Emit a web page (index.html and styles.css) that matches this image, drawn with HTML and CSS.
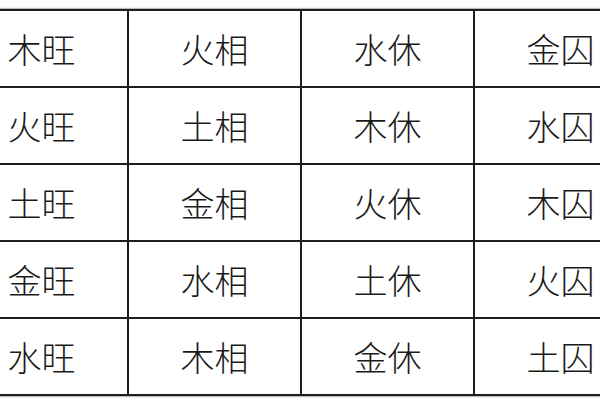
FILE: index.html
```html
<!DOCTYPE html>
<html lang="zh">
<head>
<meta charset="utf-8">
<title>旺相休囚</title>
<link rel="stylesheet" href="styles.css">
</head>
<body>
<div class="frame">
<div class="grid">
  <div class="cell">木旺</div><div class="cell">火相</div><div class="cell">水休</div><div class="cell">金囚</div>
  <div class="cell">火旺</div><div class="cell">土相</div><div class="cell">木休</div><div class="cell">水囚</div>
  <div class="cell">土旺</div><div class="cell">金相</div><div class="cell">火休</div><div class="cell">木囚</div>
  <div class="cell">金旺</div><div class="cell">水相</div><div class="cell">土休</div><div class="cell">火囚</div>
  <div class="cell">水旺</div><div class="cell">木相</div><div class="cell">金休</div><div class="cell">土囚</div>
</div>
</div>
</body>
</html>
```
FILE: styles.css
```css
html, body {
  margin: 0;
  padding: 0;
  background: #fff;
}
.frame {
  width: 600px;
  height: 400px;
  overflow: hidden;
  padding-top: 9px;
  box-sizing: border-box;
}
.grid {
  display: grid;
  grid-template-columns: repeat(4, 171px);
  grid-auto-rows: 75px;
  gap: 2px;
  padding: 2px;
  background: #1e1e1e;
  width: max-content;
  margin-left: -46px;
  box-shadow: 0 0 1px 1px #bbb;
}
.cell {
  background: #fff;
  display: flex;
  align-items: center;
  justify-content: center;
  font-family: "Noto Sans CJK SC", "Noto Sans", sans-serif;
  font-size: 34px;
  font-weight: 300;
  color: #1a1a1a;
  line-height: 1;
}
```
